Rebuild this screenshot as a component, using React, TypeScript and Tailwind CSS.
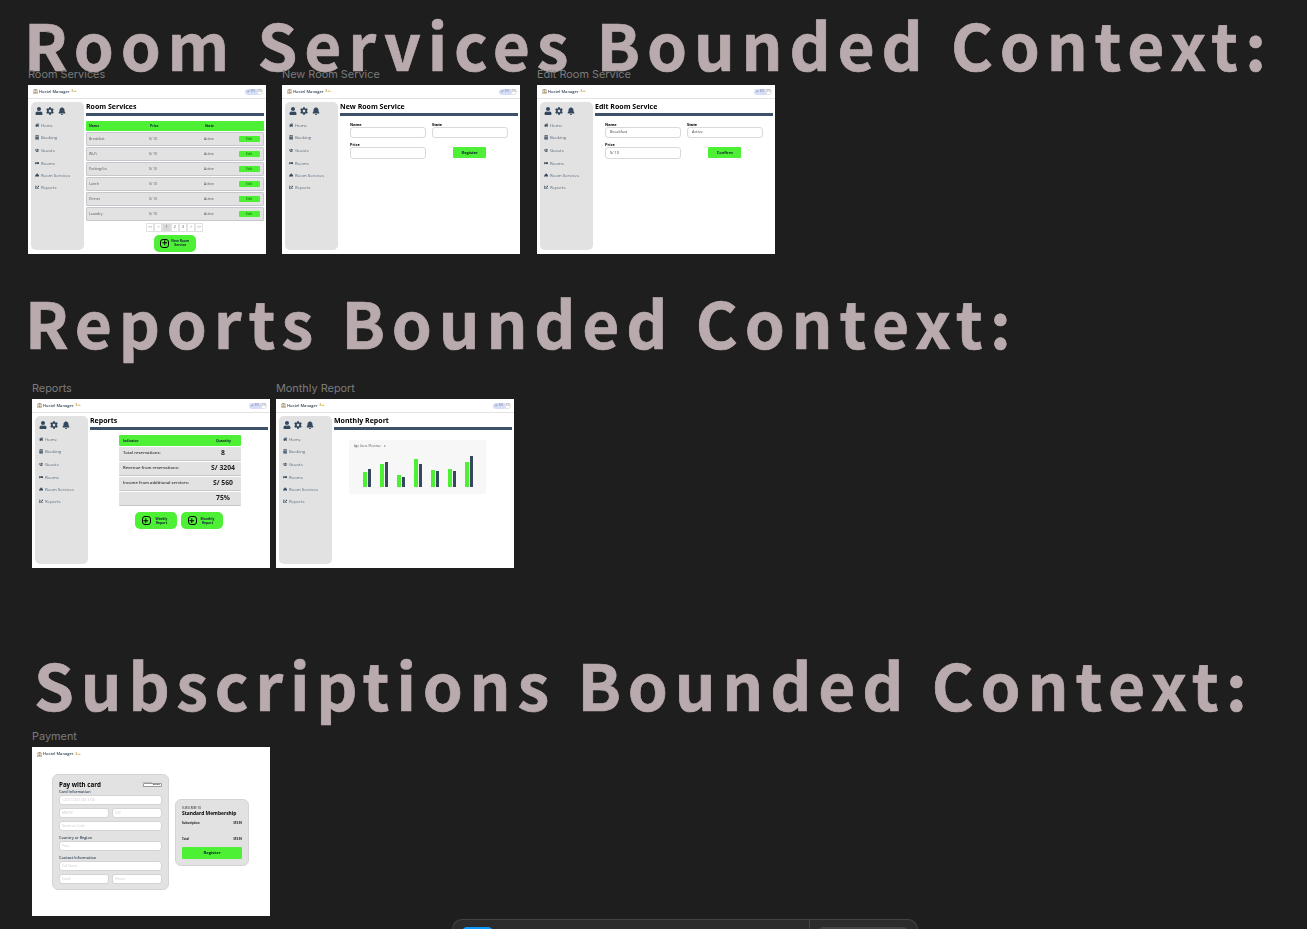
import React from "react";
import { FaUser, FaCog, FaBell, FaHome, FaCalendarAlt, FaUsers, FaBed, FaConciergeBell, FaChartLine, FaLandmark, FaCheck, FaPlus } from "react-icons/fa";

function Logo() {
  return (
    <div className="flex items-center gap-[1px] text-[4px] font-semibold text-[#34495e]">
      <FaLandmark className="text-[5px] text-[#a08560]" />
      <span>Hostel Manager</span>
      <span className="ml-[1px] text-[3px] text-[#c7a040]">8++</span>
    </div>
  );
}

function TopBar() {
  return (
    <div className="flex h-[14px] items-center justify-between border-b border-[#e2e2e2] pl-[5px] pr-[3px]">
      <Logo />
      <div className="flex items-center">
        <div className="flex h-[6px] w-[12px] items-center justify-center gap-[1px] rounded-l-[3px] bg-[#d6ddf6] text-[3px] text-[#7583a5]">
          <FaCheck className="text-[2.5px]" />
          <span>EN</span>
        </div>
        <div className="flex h-[6px] w-[6px] items-center justify-center rounded-r-[3px] border border-[#e2e2e2] text-[3px] text-[#777]">ES</div>
      </div>
    </div>
  );
}

const NAV: [React.ComponentType<{ className?: string }>, string, string][] = [
  [FaHome, "Home", "mb-[7.5px]"],
  [FaCalendarAlt, "Booking", "mb-[8px]"],
  [FaUsers, "Guests", "mb-[7.5px]"],
  [FaBed, "Rooms", "mb-[7.5px]"],
  [FaConciergeBell, "Room Services", "mb-[6.5px]"],
  [FaChartLine, "Reports", ""],
];

function Sidebar() {
  return (
    <aside className="ml-[3px] mt-[3px] flex h-[148px] w-[52.5px] shrink-0 flex-col rounded-[5px] bg-[#e2e2e2] pl-[3.5px] pt-[4.5px]">
      <div className="flex items-center gap-[3px] text-[#34495e]">
        <FaUser className="text-[8px]" />
        <FaCog className="text-[8px]" />
        <FaBell className="ml-[1px] text-[8px]" />
      </div>
      <nav className="mt-[8px] flex flex-col pl-[0.5px] text-[4.3px] leading-[5px] text-[#5a6b7d]">
        {NAV.map(([Icon, label, mb]) => (
          <div key={label} className={`flex items-center gap-[1.5px] ${mb}`}>
            <Icon className="text-[4.4px] text-[#34495e]" />
            <span>{label}</span>
          </div>
        ))}
      </nav>
    </aside>
  );
}

function Title({ children }: { children: React.ReactNode }) {
  return (
    <div className="flex h-[14px] flex-col justify-end">
      <div className="text-[7px] font-bold leading-[9px] text-black">{children}</div>
      <div className="mt-[2px] h-[3px] w-full shrink-0 bg-[#3d5268]" />
    </div>
  );
}

function Shell({ title, children }: { title: string; children: React.ReactNode }) {
  return (
    <div className="flex h-full flex-col">
      <TopBar />
      <div className="flex min-h-0 flex-1">
        <Sidebar />
        <main className="ml-[2.5px] mr-[2.5px] min-w-0 flex-1 pt-[3px]">
          <Title>{title}</Title>
          {children}
        </main>
      </div>
    </div>
  );
}

function Frame({ label, x, y, children }: { label: string; x: number; y: number; children: React.ReactNode }) {
  return (
    <section className="absolute" style={{ left: x, top: y - 16 }}>
      <div className="h-[16px] text-[10.9px] leading-[11px] text-[#7b7b7b]">{label}</div>
      <div className="h-[169px] w-[238px] overflow-hidden bg-white" style={{ fontFamily: '"Open Sans", sans-serif' }}>
        <div className="h-full blur-[0.25px]">{children}</div>
      </div>
    </section>
  );
}

const SERVICES = ["Breakfast", "Wi-Fi", "Parking/lot", "Lunch", "Dinner", "Laundry"];

function RoomServices() {
  return (
    <Shell title="Room Services">
      <div className="mt-[5px] flex h-[9.5px] items-center rounded-[1px] bg-[#4df035] pl-[3px] text-[3.4px] font-bold text-[#123]">
        <span className="w-[61px]">Name</span>
        <span className="w-[55px]">Price</span>
        <span>State</span>
      </div>
      <div className="mt-[1.5px] flex flex-col gap-[1px]">
        {SERVICES.map((s) => (
          <div key={s} className="flex h-[14px] items-center rounded-[1px] border border-[#c4c8cc] bg-[#e2e2e2] pl-[2px] text-[3.5px] text-[#555]">
            <span className="w-[60px]">{s}</span>
            <span className="w-[55px]">S/ 10</span>
            <span className="w-[34.5px]">Active</span>
            <span className="flex h-[6px] w-[21px] items-center justify-center rounded-[1px] bg-[#4df035] text-[#1b5a10]">Edit</span>
          </div>
        ))}
      </div>
      <div className="mt-[1.5px] flex justify-center">
        {["<<", "<", "1", "2", "3", ">", ">>"].map((p, i) => (
          <span
            key={p}
            className={`flex h-[9px] w-[8.2px] items-center justify-center border border-[#e2e2e2] text-[3.4px] text-[#444] ${i === 2 ? "bg-[#d9d9d9]" : "bg-white"}`}
          >
            {p}
          </span>
        ))}
      </div>
      <div className="mt-[3px] flex justify-center">
        <GreenAction text="New Room Service" />
      </div>
    </Shell>
  );
}

function GreenAction({ text }: { text: string }) {
  return (
    <div className="flex h-[17px] w-[42px] items-center justify-center gap-[2px] rounded-[5px] bg-[#4df035]">
      <span className="flex h-[9px] w-[9px] items-center justify-center rounded-[3px] border-[0.8px] border-black">
        <FaPlus className="text-[5.5px] text-black" />
      </span>
      <span className="w-[18px] text-center text-[3.3px] font-bold leading-[4px] text-[#123]">{text}</span>
    </div>
  );
}

function Field({ label, value }: { label: string; value?: string }) {
  return (
    <div>
      <div className="text-[3.9px] font-bold leading-[5px] text-black">{label}</div>
      <div className="flex h-[11.5px] w-[75.5px] items-center rounded-[3px] border border-[#d8d8de] bg-white pl-[4px] text-[3.9px] text-[#444]">{value}</div>
    </div>
  );
}

function ServiceForm({ name, state, price, action }: { name?: string; state?: string; price?: string; action: string }) {
  return (
    <div className="ml-[10px] mt-[5.5px] grid w-[157px] grid-cols-[82px_75.5px] gap-y-[4px]">
      <Field label="Name" value={name} />
      <Field label="State" value={state} />
      <Field label="Price" value={price} />
      <div className="mt-[5px] flex justify-center">
        <div className="flex h-[11px] w-[33px] items-center justify-center rounded-[1px] bg-[#4df035] text-[4px] font-bold text-[#123]">{action}</div>
      </div>
    </div>
  );
}

const INDICATORS = [
  ["Total reservations:", "8"],
  ["Revenue from reservations:", "S/ 3204"],
  ["Income from additional services:", "S/ 560"],
  ["", "75%"],
];

function Reports() {
  return (
    <Shell title="Reports">
      <div className="ml-[29px] mt-[5px] w-[122px]">
        <div className="flex h-[11px] items-center justify-between rounded-[1px] bg-[#4df035] pl-[4px] pr-[10px] text-[3.4px] font-bold text-[#123]">
          <span>Indicator</span>
          <span>Quantity</span>
        </div>
        <div className="mt-[1px] flex flex-col gap-[1px]">
          {INDICATORS.map(([a, b]) => (
            <div key={b} className="flex h-[14px] items-center justify-between rounded-[1px] border-b border-[#c4c8cc] bg-[#e2e2e2] pl-[4px] pr-[6px] text-[4.2px] font-semibold text-[#333]">
              <span>{a}</span>
              <span className="w-[24px] text-center text-[6.8px] font-bold text-[#222]">{b}</span>
            </div>
          ))}
        </div>
        <div className="mr-[2px] mt-[6px] flex justify-center gap-[4px]">
          <GreenAction text="Weekly Report" />
          <GreenAction text="Monthly Report" />
        </div>
      </div>
    </Shell>
  );
}

const BARS = [[15, 18], [23, 25], [12, 10], [28, 23], [17, 16], [18, 16], [25, 31]];

function Monthly() {
  return (
    <Shell title="Monthly Report">
      <div className="ml-[15px] mt-[10px] h-[54px] w-[137px] rounded-[1px] bg-[#f7f7f7]">
        <div className="pl-[5px] pt-[3px] text-[2.8px] leading-[6px] text-[#555]">Ago Users / Revenue &nbsp;&nbsp; ▾</div>
        <div className="ml-[14px] mt-[1px] flex h-[37px] items-end gap-[9px]">
          {BARS.map(([g, n], i) => (
            <div key={i} className="flex items-end gap-[1px]">
              <div className="w-[3.5px] bg-[#4df035]" style={{ height: g }} />
              <div className="w-[3.5px] bg-[#34495e]" style={{ height: n }} />
            </div>
          ))}
        </div>
      </div>
    </Shell>
  );
}

function Input({ hint, className = "" }: { hint: string; className?: string }) {
  return (
    <div className={`flex h-[10px] items-center rounded-[3px] border border-[#d4d4d4] bg-white pl-[2px] text-[3.3px] text-[#ccc] ${className}`}>{hint}</div>
  );
}

function Payment() {
  return (
    <div className="flex h-full flex-col">
      <div className="flex h-[14px] items-center pl-[5px]">
        <Logo />
      </div>
      <div className="ml-[20px] mt-[13px] flex items-center gap-[6px]">
        <div className="h-[116px] w-[117px] rounded-[6px] border border-[#d4d4d4] bg-[#e2e2e2] px-[6px] pt-[5px]">
          <div className="flex items-center justify-between">
            <span className="text-[6.2px] font-bold leading-[9px] text-black">Pay with card</span>
            <span className="flex h-[4px] w-[19px] items-center justify-end gap-[1px] rounded-[1px] border-[0.5px] border-[#999] bg-white pr-[1px] text-[2.4px] font-bold text-[#333]">
              <span className="font-normal text-[#888]">Powered by</span>stripe
            </span>
          </div>
          <div className="text-[3.8px] font-semibold leading-[6px] text-[#34495e]">Card Information</div>
          <Input hint="1234 1234 1234 1234" />
          <div className="mt-[3px] flex gap-[3px]">
            <Input hint="MM/YY" className="flex-1" />
            <Input hint="CVC" className="flex-1" />
          </div>
          <Input hint="Name on Card" className="mt-[3px]" />
          <div className="mt-[4px] text-[3.8px] font-semibold leading-[6px] text-[#34495e]">Country or Region</div>
          <Input hint="Peru" />
          <div className="mt-[4px] text-[3.8px] font-semibold leading-[6px] text-[#34495e]">Contact Information</div>
          <Input hint="Full Name" />
          <div className="mt-[3px] flex gap-[3px]">
            <Input hint="Email" className="flex-1" />
            <Input hint="Phone" className="flex-1" />
          </div>
        </div>
        <div className="h-[67px] w-[74px] rounded-[6px] border border-[#d4d4d4] bg-[#e2e2e2] px-[6px] pt-[7px]">
          <div className="text-[2.8px] font-semibold leading-[3px] text-[#555]">SUBSCRIBE TO</div>
          <div className="whitespace-nowrap text-[4.9px] font-bold leading-[7px] text-black">Standard Membership</div>
          <div className="mt-[4px] flex justify-between text-[2.8px] font-bold text-[#222]">
            <span>Subscription</span>
            <span>$59.90</span>
          </div>
          <div className="mt-[12px] flex justify-between text-[2.8px] font-bold text-[#222]">
            <span>Total</span>
            <span>$59.90</span>
          </div>
          <div className="mt-[6px] flex h-[12px] items-center justify-center rounded-[1px] bg-[#4df035] text-[4.2px] font-bold text-[#123]">Register</div>
        </div>
      </div>
    </div>
  );
}

function Heading({ x, y, children }: { x: number; y: number; children: React.ReactNode }) {
  return (
    <h1
      className="absolute whitespace-nowrap text-[64px] font-bold leading-[50px] tracking-[6.85px] text-[#b9abad] [-webkit-text-stroke:0.7px_#b9abad]"
      style={{ left: x, top: y, fontFamily: '"Noto Sans CJK JP", sans-serif' }}
    >
      {children}
    </h1>
  );
}

export default function App() {
  return (
    <div className="relative h-[929px] w-[1307px] overflow-hidden bg-[#1e1e1e]" style={{ fontFamily: "Inter, sans-serif" }}>
      <Heading x={24} y={18}>Room Services Bounded Context:</Heading>
      <Heading x={25} y={296}>Reports Bounded Context:</Heading>
      <Heading x={34} y={658}>Subscriptions Bounded Context:</Heading>

      <Frame label="Room Services" x={28} y={85}><RoomServices /></Frame>
      <Frame label="New Room Service" x={282} y={85}>
        <Shell title="New Room Service"><ServiceForm action="Register" /></Shell>
      </Frame>
      <Frame label="Edit Room Service" x={537} y={85}>
        <Shell title="Edit Room Service"><ServiceForm name="Breakfast" state="Active" price="S/ 10" action="Confirm" /></Shell>
      </Frame>
      <Frame label="Reports" x={32} y={399}><Reports /></Frame>
      <Frame label="Monthly Report" x={276} y={399}><Monthly /></Frame>
      <Frame label="Payment" x={32} y={747}><Payment /></Frame>

      <div className="absolute bottom-0 left-[452px] flex h-[10px] w-[466px] overflow-hidden rounded-t-[13px] border border-b-0 border-[#444] bg-[#2c2c2c]">
        <div className="ml-[9px] mt-[7px] h-[8px] w-[31px] rounded-t-[5px] bg-[#0d99ff]" />
        <div className="ml-auto h-full w-[108px] border-l border-[#444] pl-[8px] pr-[9px] pt-[7px]">
          <div className="h-[8px] rounded-t-[5px] bg-[#444]" />
        </div>
      </div>
    </div>
  );
}
